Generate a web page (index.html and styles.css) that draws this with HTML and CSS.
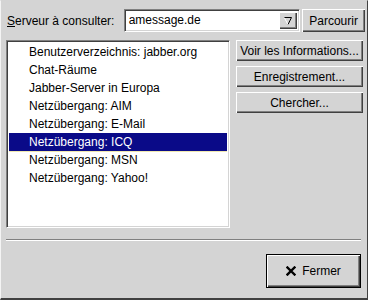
FILE: index.html
```html
<!DOCTYPE html>
<html>
<head>
<meta charset="utf-8">
<link rel="stylesheet" href="styles.css">
</head>
<body>
<div class="dialog">
  <div class="top-row">
    <label class="label"><u>S</u>erveur à consulter:</label>
    <div class="combo">
      <div class="combo-text">amessage.de</div>
      <div class="combo-btn">
        <svg width="10" height="10" viewBox="0 0 10 10">
          <path d="M1.5 1.5 L8.5 1.5 L5 8.5" fill="none" stroke="#000" stroke-width="1"/>
          <path d="M1.5 2 L5 8.5" fill="none" stroke="#fff" stroke-width="1"/>
        </svg>
      </div>
    </div>
    <div class="btn btn-browse">Parcourir</div>
  </div>
  <div class="main">
    <div class="list">
      <div class="item">Benutzerverzeichnis: jabber.org</div>
      <div class="item">Chat-Räume</div>
      <div class="item">Jabber-Server in Europa</div>
      <div class="item">Netzübergang: AIM</div>
      <div class="item">Netzübergang: E-Mail</div>
      <div class="item selected">Netzübergang: ICQ</div>
      <div class="item">Netzübergang: MSN</div>
      <div class="item">Netzübergang: Yahoo!</div>
    </div>
    <div class="side">
      <div class="btn side-btn">Voir les Informations...</div>
      <div class="btn side-btn">Enregistrement...</div>
      <div class="btn side-btn">Chercher...</div>
    </div>
  </div>
  <div class="separator"></div>
  <div class="bottom">
    <div class="default-frame">
      <div class="btn btn-close">
        <svg class="x-icon" width="10" height="10" viewBox="0 0 10 10">
          <path d="M1.5 1.5 L8.5 8.5 M8.5 1.5 L1.5 8.5" stroke="#000" stroke-width="2.4" stroke-linecap="square"/>
        </svg>
        <span>Fermer</span>
      </div>
    </div>
  </div>
</div>
</body>
</html>
```

FILE: styles.css
```css
html, body {
  margin: 0;
  padding: 0;
}
body {
  width: 368px;
  height: 300px;
  background: #d4d4d4;
  font-family: "Liberation Sans", Arial, sans-serif;
  font-size: 12px;
  color: #000;
  overflow: hidden;
}
.dialog {
  box-sizing: border-box;
  width: 368px;
  height: 300px;
  border-left: 1px solid #f4f4f4;
  border-top: 1px solid #d4d4d4;
  border-right: 1px solid #404040;
  border-bottom: 2px solid #404040;
  padding: 8px 2px 0 5px;
}
.top-row {
  display: flex;
  align-items: center;
  height: 23px;
}
.label {
  width: 117px;
  padding-left: 1px;
  font-size: 12px;
  white-space: nowrap;
}
.combo {
  display: flex;
  width: 177px;
  height: 23px;
  box-sizing: border-box;
  background: #fff;
  border-top: 1px solid #808080;
  border-left: 1px solid #808080;
  border-right: 1px solid #fff;
  border-bottom: 1px solid #fff;
  box-shadow: inset 1px 1px 0 #404040, inset -1px -1px 0 #d4d4d4;
}
.combo-text {
  flex: 1;
  padding: 3px 0 0 4px;
  font-size: 12px;
}
.combo-btn {
  width: 18px;
  margin: 2px 2px 2px 0;
  background: #d4d4d4;
  display: flex;
  align-items: center;
  justify-content: center;
  box-shadow: inset 1px 1px 0 #fff, inset -1px -1px 0 #404040, inset -2px -2px 0 #808080;
}
.btn {
  box-sizing: border-box;
  background: #d4d4d4;
  display: flex;
  align-items: center;
  justify-content: center;
  font-size: 12px;
  white-space: nowrap;
  box-shadow: inset 1px 1px 0 #fff, inset -1px -1px 0 #404040, inset -2px -2px 0 #808080;
}
.btn-browse {
  margin-left: 2px;
  width: 63px;
  height: 23px;
}
.main {
  display: flex;
  margin-top: 8px;
  height: 188px;
}
.list {
  box-sizing: border-box;
  width: 224px;
  height: 188px;
  background: #fff;
  border-top: 1px solid #808080;
  border-left: 1px solid #808080;
  border-right: 1px solid #fff;
  border-bottom: 1px solid #fff;
  box-shadow: inset 1px 1px 0 #404040, inset -1px -1px 0 #d4d4d4;
  padding: 2px 2px;
}
.item {
  height: 18px;
  line-height: 18px;
  padding-left: 20px;
  font-size: 12px;
  white-space: nowrap;
}
.item.selected {
  background: #0a0a88;
  color: #fff;
  box-shadow: 0 1px 0 #f0e8b0;
}
.side {
  display: flex;
  flex-direction: column;
  gap: 5px;
  margin-left: 6px;
}
.side-btn {
  width: 127px;
  height: 21px;
}
.separator {
  margin: 11px 4px 0 0;
  height: 0;
  border-top: 1px solid #808080;
  border-bottom: 1px solid #fff;
}
.bottom {
  display: flex;
  justify-content: flex-end;
  padding: 13px 4px 0 0;
}
.default-frame {
  border: 1px solid #000;
  padding: 0;
}
.btn-close {
  width: 93px;
  height: 32px;
  gap: 6px;
  font-size: 12px;
}
.x-icon {
  display: block;
}
```
